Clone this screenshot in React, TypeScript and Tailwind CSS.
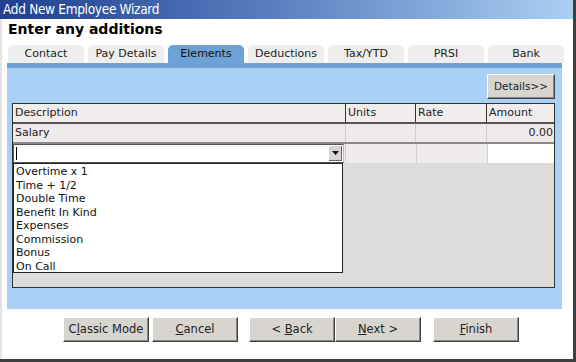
import React from 'react';

const tabs = ['Contact', 'Pay Details', 'Elements', 'Deductions', 'Tax/YTD', 'PRSI', 'Bank'];
const options = ['Overtime x 1', 'Time + 1/2', 'Double Time', 'Benefit In Kind', 'Expenses', 'Commission', 'Bonus', 'On Call'];

function WinButton({ children, className = '' }: { children: React.ReactNode; className?: string }) {
  return (
    <div
      className={`h-[25px] flex items-center justify-center bg-[#d8d5d0] border border-t-white border-l-white border-r-[#404040] border-b-[#404040] shadow-[inset_-1px_-1px_0_#8a8884] text-[#222] ${className}`}
    >
      {children}
    </div>
  );
}

export default function App() {
  return (
    <div
      className="w-[576px] h-[362px] bg-white border-r-[3px] border-b-[3px] border-r-[#404040] border-b-[#404040] flex flex-col overflow-hidden"
      style={{ fontFamily: '"DejaVu Sans", Verdana, sans-serif' }}
    >
      {/* title bar */}
      <div className="h-[19px] shrink-0 bg-gradient-to-r from-[#1f3f8f] via-[#5d82c2] to-[#abd0f2] flex items-center pl-[3px] text-white text-[13.5px] tracking-[-0.3px]" style={{ fontFamily: '"DejaVu Sans Condensed", Tahoma, sans-serif' }}>
        Add New Employee Wizard
      </div>

      <div className="flex-1 border-l-[2px] border-l-[#e4e4e4] flex flex-col pl-[5px]">
        <div className="mt-[1px] h-[19px] pl-[1px] text-[14px] font-bold text-black leading-[19px]">Enter any additions</div>

        {/* tabs */}
        <div className="mt-[6px] flex gap-[4px] pl-[1px] h-[18px]">
          {tabs.map((t) => (
            <div
              key={t}
              className={`w-[76px] rounded-t-[5px] flex items-center justify-center text-[11px] ${
                t === 'Elements' ? 'bg-[#6ea2d6] text-[#111]' : 'bg-[#eeeeee] text-[#222]'
              }`}
            >
              {t}
            </div>
          ))}
        </div>

        {/* panel */}
        <div className="w-[555px] h-[246px] bg-[#a9d0f5] border-t-[5px] border-t-[#6ea2d6] flex flex-col">
          <div className="flex justify-end pr-[7px] pt-[6px]">
            <WinButton className="w-[68px] h-[21px] text-[10.5px]">Details&gt;&gt;</WinButton>
          </div>

          {/* table */}
          <div className="mt-[4px] ml-[5px] w-[543px] h-[185px] border border-[#333] bg-[#dcdcdc] flex flex-col text-[11px] text-[#222]">
            <div className="flex h-[20px] bg-[#f1eded] border-b-[2px] border-b-[#555]">
              <div className="w-[332px] pl-[2px] flex items-center">Description</div>
              <div className="w-[70px] pl-[2px] flex items-center border-l border-[#333]">Units</div>
              <div className="w-[71px] pl-[2px] flex items-center border-l border-[#333]">Rate</div>
              <div className="flex-1 pl-[2px] flex items-center border-l border-[#333]">Amount</div>
            </div>
            <div className="flex h-[20px] bg-[#efebec] border-b-[2px] border-b-[#8a8a8a]">
              <div className="w-[332px] pl-[2px] flex items-center">Salary</div>
              <div className="w-[70px] border-l border-[#d0cccc]" />
              <div className="w-[71px] border-l border-[#d0cccc]" />
              <div className="flex-1 pr-[1px] flex items-center justify-end border-l border-[#d0cccc]">0.00</div>
            </div>
            <div className="flex h-[19px] bg-[#efebec]">
              <div className="w-[331px] bg-white border border-[#555] border-r-[#bbb] flex items-center relative">
                <div className="ml-[2px] w-[1px] h-[13px] bg-black" />
                <div className="absolute right-[1px] top-[1px] w-[13px] h-[15px] bg-[#d8d5d0] border-r border-b border-[#666] flex items-center justify-center">
                  <svg width="7" height="4" viewBox="0 0 7 4">
                    <path d="M0 0h7L3.5 4z" fill="#111" />
                  </svg>
                </div>
              </div>
              <div className="w-[71px] ml-[1px] border-l border-[#d0cccc]" />
              <div className="w-[71px] border-l border-[#d0cccc]" />
              <div className="flex-1 bg-white border-l border-[#d0cccc]" />
            </div>
            <div className="w-[330px] h-[110px] bg-white border border-[#222] pl-[2px] pt-[1px] flex flex-col text-[11px] leading-[13.5px] text-[#111]">
              {options.map((o) => (
                <div key={o}>{o}</div>
              ))}
            </div>
          </div>
        </div>

        {/* buttons */}
        <div className="mt-[8px] flex pl-[56px] text-[11.5px]">
          <WinButton className="w-[86px]">
            <span>C<u>l</u>assic Mode</span>
          </WinButton>
          <WinButton className="w-[86px] ml-[3px]">
            <span><u>C</u>ancel</span>
          </WinButton>
          <WinButton className="w-[86px] ml-[11px]">
            <span>&lt; <u>B</u>ack</span>
          </WinButton>
          <WinButton className="w-[86px]">
            <span><u>N</u>ext &gt;</span>
          </WinButton>
          <WinButton className="w-[86px] ml-[12px]">
            <span><u>F</u>inish</span>
          </WinButton>
        </div>
      </div>
    </div>
  );
}
